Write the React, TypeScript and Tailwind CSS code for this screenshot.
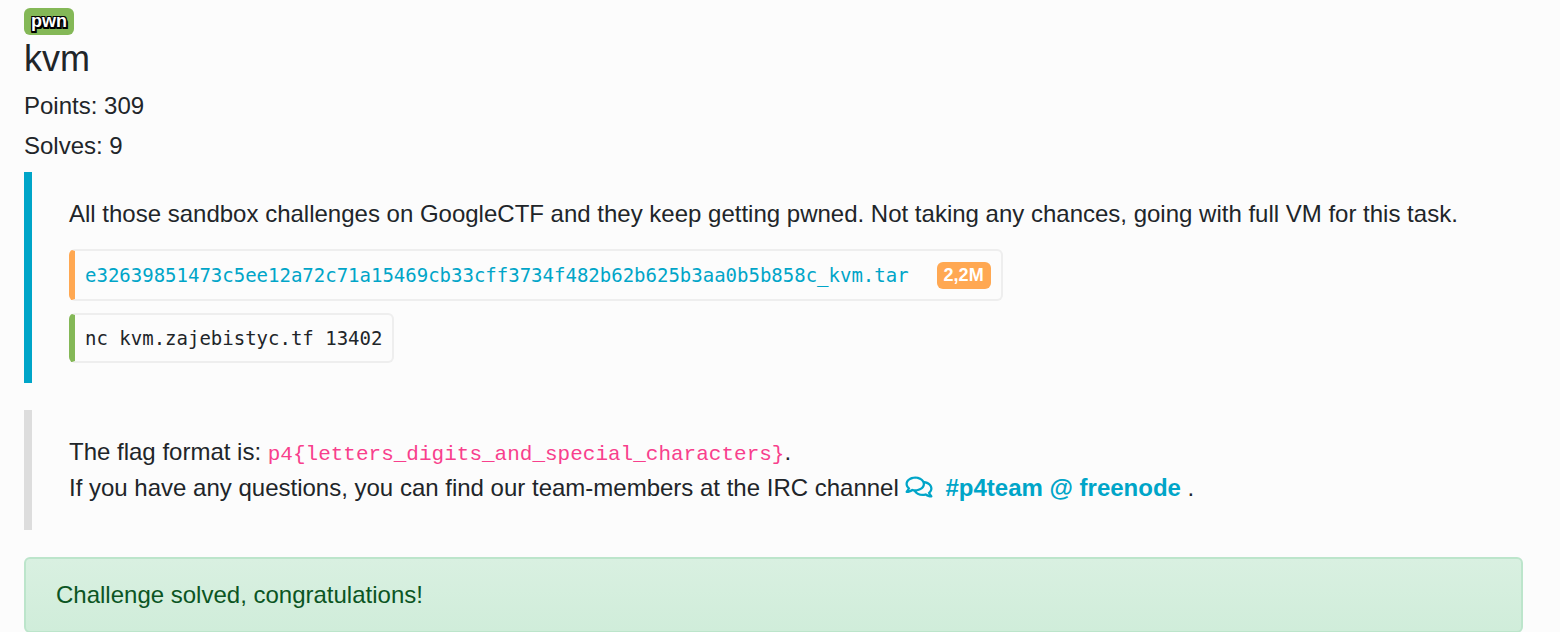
import { FaRegComments } from "react-icons/fa";

export default function App() {
  return (
    <main className="min-h-screen bg-[#fcfcfc] pt-2 pr-[37px] pl-6 font-['Liberation_Sans',Arial,sans-serif] text-2xl leading-9 text-[#212529]">
      <header>
        <span className="flex h-[27px] w-fit items-center rounded-[6px] bg-[#84b857] px-[7px] pb-0.5 text-lg leading-none font-bold text-white [text-shadow:-1px_-1px_0_#000,1px_-1px_0_#000,-1px_1px_0_#000,1px_1px_0_#000,-1px_2px_0_#000,1px_2px_0_#000,2px_2px_0_#000]">
          pwn
        </span>
        <h1 className="mt-1 text-4xl leading-10">kvm</h1>
        <p className="mt-[9px]">Points: 309</p>
        <p className="mt-1">Solves: 9</p>
      </header>

      <section className="mt-2 border-l-8 border-[#00a5c8] pr-6 pl-[37px] pt-6 pb-5">
        <p>
          All those sandbox challenges on GoogleCTF and they keep getting pwned. Not taking any chances, going with full VM for this task.
        </p>
        <div className="mt-[17px] flex h-[52px] w-fit items-center gap-7 rounded-[6px] border-2 border-l-6 border-[#eeeeee] border-l-[#ffa852] px-[10px]">
          <a href="#download" className="font-['DejaVu_Sans_Mono',monospace] text-[19px] text-[#00a5c8]">
            e32639851473c5ee12a72c71a15469cb33cff3734f482b62b625b3aa0b5b858c_kvm.tar
          </a>
          <span className="flex h-[27px] items-center rounded-[6px] bg-[#ffa852] px-[7px] text-lg leading-none font-bold text-white">2,2M</span>
        </div>
        <div className="mt-3 flex h-[50px] w-fit items-center rounded-[6px] border-2 border-l-6 border-[#eeeeee] border-l-[#84b857] px-[10px] font-['DejaVu_Sans_Mono',monospace] text-[19px]">
          nc kvm.zajebistyc.tf 13402
        </div>
      </section>

      <section className="mt-[27px] border-l-8 border-[#dddddd] px-[37px] py-6">
        <p>
          The flag format is:{" "}
          <code className="font-['Liberation_Mono',monospace] text-[21px] leading-none text-[#f83f8c]">{"p4{letters_digits_and_special_characters}"}</code>.
        </p>
        <p>
          If you have any questions, you can find our team-members at the IRC channel{" "}
          <a href="#irc" className="font-bold text-[#00a5c8]">
            <FaRegComments className="mr-3 inline h-6 w-7 align-[-3px]" />
            #p4team @ freenode
          </a>{" "}
          .
        </p>
      </section>

      <div role="status" className="mt-[27px] rounded-[6px] border-2 border-[#bce5cb] bg-linear-to-b from-[#d9f0e1] to-[#d0edda] px-[30px] py-[18px] text-[#0b5523]">
        Challenge solved, congratulations!
      </div>
    </main>
  );
}
